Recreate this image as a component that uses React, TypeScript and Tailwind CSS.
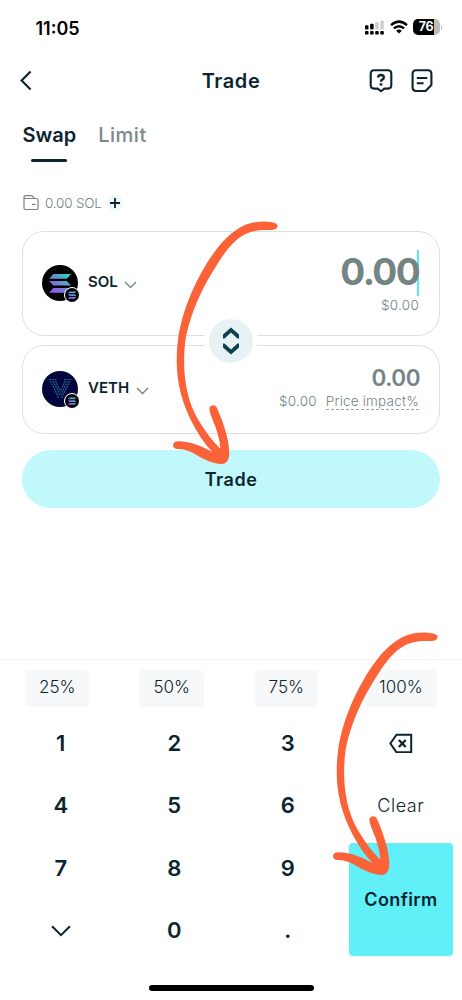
import React from 'react';

const percentages = ['25%', '50%', '75%', '100%'];

const BackIcon: React.FC = () => (
  <svg width="14" height="22" viewBox="0 0 14 22" fill="none" stroke="#0b2530" strokeWidth="2.2">
    <path d="M11.6 1.5L2.6 10.5L11.6 19.5" />
  </svg>
);

const HelpIcon: React.FC = () => (
  <svg width="24" height="24" viewBox="0 0 24 24" fill="none" stroke="#0b2530" strokeWidth="2.1" strokeLinejoin="round">
    <path d="M5 1.3H19Q22.3 1.3 22.3 4.8V16.3Q22.3 19.6 19 19.6H15.3L12 22.2L8.7 19.6H5Q1.7 19.6 1.7 16.3V4.8Q1.7 1.3 5 1.3Z" />
    <path d="M9.2 8.5Q9.2 6 12 6Q14.8 6 14.8 8.4Q14.8 9.9 13.2 10.6Q12 11.2 12 12.7" strokeWidth="2.4" />
    <path d="M10.7 15.4H13.3" strokeWidth="2.4" />
  </svg>
);

const NoteIcon: React.FC = () => (
  <svg width="22" height="24" viewBox="0 0 22 24" fill="none" stroke="#0b2530" strokeWidth="2.1" strokeLinejoin="round">
    <path d="M5 1.3H17Q20.4 1.3 20.4 4.8V16L14.6 22H5Q1.6 22 1.6 18.6V4.8Q1.6 1.3 5 1.3Z" />
    <path d="M5.8 9H16.2M5.8 14.2H12.6" />
  </svg>
);

const StatusIcons: React.FC = () => (
  <div className="flex items-center">
    <svg width="20" height="15" viewBox="0 0 20 15">
      <g fill="#000">
        <rect x="0" y="5.2" width="3.5" height="4.3" rx="0.9" />
        <rect x="5.1" y="3.7" width="3.5" height="5.8" rx="0.9" />
        <rect x="0" y="11" width="3.5" height="3.6" rx="0.9" />
        <rect x="5.1" y="11" width="3.5" height="3.6" rx="0.9" />
        <rect x="10.2" y="11" width="3.5" height="3.6" rx="0.9" />
        <rect x="15.3" y="11" width="3.5" height="3.6" rx="0.9" />
      </g>
      <g fill="#cfcfcf">
        <rect x="10.2" y="2" width="3.5" height="7.5" rx="0.9" />
        <rect x="15.3" y="0.5" width="3.5" height="9" rx="0.9" />
      </g>
    </svg>
    <svg className="mr-[5px] ml-[4.5px]" width="18" height="14" viewBox="0 0 18 14" fill="none" stroke="#000" strokeWidth="2.5">
      <path d="M1 5.1Q9 -1.9 17 5.1" />
      <path d="M3.9 8.4Q9 4 14.1 8.4" />
      <path d="M9 13.6L6.1 10.7Q9 8.5 11.9 10.7Z" fill="#000" stroke="none" />
    </svg>
    <div className="flex h-[15.5px] w-[27px] items-center justify-center rounded-[5px] bg-linear-to-r from-black from-76% to-[#bdbdbd] to-76% font-[Inter] text-[12.5px] font-bold tracking-[-0.3px] text-white">
      76
    </div>
    <div className="ml-px h-[5px] w-[1.5px] rounded-r-full bg-[#bdbdbd]" />
  </div>
);

const SolanaMark: React.FC<{ size: number; id: string }> = ({ size, id }) => (
  <svg width={size} height={size} viewBox="0 0 36 36">
    <defs>
      <linearGradient id={id} x1="8" y1="28" x2="28" y2="8" gradientUnits="userSpaceOnUse">
        <stop offset="0" stopColor="#a64bf5" />
        <stop offset="0.45" stopColor="#6e80d8" />
        <stop offset="1" stopColor="#25e6a5" />
      </linearGradient>
    </defs>
    <circle cx="18" cy="18" r="18" fill="#020204" />
    <path
      fill={`url(#${id})`}
      d="M11.3 9H29L24.9 13.8H7.2ZM7.2 16H24.9L29 20.5H11.3ZM11.3 23H29L24.9 27.8H7.2Z"
    />
  </svg>
);

const VethMark: React.FC = () => (
  <svg width="36" height="36" viewBox="0 0 36 36">
    <circle cx="18" cy="18" r="18" fill="#03063a" />
    <g fill="none" stroke="#286098" strokeWidth="1.2" strokeDasharray="2 0.8">
      <path d="M7 8.5H14.5M22 8.5H29.5" />
      <path d="M8.5 10L17 27.5M11 10L18 24M13.5 10L18.4 20.5" />
      <path d="M28 10L19.3 27.5M25.5 10L18.8 24M23 10L18.4 20.5" />
    </g>
  </svg>
);

const Chevron: React.FC = () => (
  <svg className="ml-[6.5px] mt-[3px]" width="13" height="8" viewBox="0 0 13 8" fill="none" stroke="#748383" strokeWidth="1.4">
    <path d="M1 1L6.5 6.4L12 1" />
  </svg>
);

interface TokenProps {
  symbol: string;
  icon: React.ReactNode;
  badgeId: string;
}

const Token: React.FC<TokenProps> = ({ symbol, icon, badgeId }) => (
  <div className="flex items-center pb-px">
    <div className="relative h-9 w-9">
      {icon}
      <div className="absolute top-[22px] left-[22px] rounded-full border border-white bg-white">
        <SolanaMark size={14} id={badgeId} />
      </div>
    </div>
    <span className="ml-[10px] pb-px text-[15px] font-semibold">{symbol}</span>
    <Chevron />
  </div>
);

// Hand drawn pointer, traced at three times its drawn size
const Arrow: React.FC = () => (
  <svg width="110" height="250" viewBox="120 25 330 750" fill="#fc6238">
    <path d="M443 46Q442 34 412 33C355 30 318 50 272 100C215 168 157 285 144 388C132 487 148 560 187 637C204 670 224 700 248 725C219 708 180 691 142 692C128 693 124 708 137 714C184 716 196 733 224 746C245 756 260 760 276 760C287 759 294 751 297 738C302 700 282 639 261 592C256 580 239 581 238 595C240 610 250 632 257 650C264 675 270 690 271 714C246 689 224 660 203 624C163 555 156 463 167 383C183 303 216 232 261 162C295 107 325 76 362 64C389 56 409 59 427 58Q442 56 443 46Z" />
  </svg>
);

const DigitKey: React.FC<{ label: string }> = ({ label }) => (
  <button className="flex items-center justify-center text-[22px] font-semibold">{label}</button>
);

const App: React.FC = () => {
  return (
    <div className="relative flex h-[1000px] w-[462px] flex-col overflow-hidden bg-white font-[Inter,sans-serif] text-[#0b2530]">
      {/* Status bar */}
      <div className="flex h-[54px] items-center justify-between pr-[20px] pl-[35.5px]">
        <span className="pt-[2px] text-[18px] font-semibold text-black">11:05</span>
        <StatusIcons />
      </div>

      {/* Header */}
      <div className="grid h-[54px] grid-cols-3 items-center pr-[29px] pl-[19px]">
        <BackIcon />
        <h1 className="pl-[10px] text-center text-[20px] font-semibold tracking-[0.6px]">Trade</h1>
        <div className="flex justify-end gap-[18px]">
          <HelpIcon />
          <NoteIcon />
        </div>
      </div>

      {/* Tabs */}
      <div className="flex h-[74px] items-start gap-[22px] px-[22.5px] pt-[13px] text-[20px] leading-7">
        <div className="flex flex-col items-center">
          <span className="font-semibold">Swap</span>
          <span className="mt-[9.5px] h-[3px] w-9 rounded-full bg-[#0b2530]" />
        </div>
        <span className="font-medium tracking-[0.5px] text-[#7b8989]">Limit</span>
      </div>

      {/* Balance */}
      <div className="flex h-[42px] items-center px-[23px] text-[13.5px] font-light text-[#748383]">
        <svg width="16" height="16" viewBox="0 0 16 16" fill="none" stroke="#748383" strokeWidth="1.2">
          <path d="M1 2.5V13Q1 14.5 2.5 14.5H13.5Q15 14.5 15 13V5Q15 3.5 13.5 3.5H2.5Q1 3.5 1 2Q1 0.7 2.5 0.7H8.5Q10 0.7 11 3.2M9 9.3H12.5" />
        </svg>
        <span className="ml-[6px] tracking-[-0.2px]">0.00 SOL</span>
        <div className="ml-[5px] flex h-4 w-4 items-center justify-center rounded-full bg-[#edf8fa]">
          <svg width="10" height="10" viewBox="0 0 10 10" stroke="#0b2530" strokeWidth="1.8">
            <path d="M5 0V10M0 5H10" />
          </svg>
        </div>
      </div>

      {/* Swap cards */}
      <div className="relative mx-[22px] mt-[7px] flex flex-col gap-[9px]">
        <div className="flex h-[105px] justify-between rounded-[22px] border border-[#dce0e1] pr-[20px] pl-[19px]">
          <Token symbol="SOL" icon={<SolanaMark size={36} id="sol" />} badgeId="sol-badge" />
          <div className="flex flex-col items-end pt-[18px]">
            <div className="flex h-[46px] items-center border-r-[2px] border-[#5ee6ee] pb-[2px] text-[37px] font-bold tracking-[-1.6px] text-[#748383]">
              <span className="-mr-[2px]">0.00</span>
            </div>
            <span className="text-[13.5px] leading-[18px] font-light tracking-[0.25px] text-[#748383]">$0.00</span>
          </div>
        </div>
        <div className="flex h-[89px] justify-between rounded-[22px] border border-[#dce0e1] pr-[19px] pl-[19px]">
          <Token symbol="VETH" icon={<VethMark />} badgeId="veth-badge" />
          <div className="flex flex-col items-end pt-[18px] text-[#748383]">
            <span className="text-[22.5px] leading-7 font-semibold tracking-[-0.5px]">0.00</span>
            <div className="mt-[2px] mr-px flex gap-[9px] text-[13.5px] leading-[15px] font-light tracking-[0.2px]">
              <span>$0.00</span>
              <span className="border-b border-dashed border-[#9aa5a5]">Price impact%</span>
            </div>
          </div>
        </div>
        <button className="absolute top-[82.5px] left-[182px] flex h-[54px] w-[54px] items-center justify-center rounded-full border-[5px] border-white bg-[#e7f2f4]">
          <svg width="18" height="28" viewBox="0 0 18 28" fill="#0b4150">
            <path d="M9 0.5L17 7.6V11.5L15.5 11.5L9 5.6L2.5 11.5H1V7.6Z" />
            <path d="M9 27.5L17 20.4V16.5H15.5L9 22.4L2.5 16.5H1V20.4Z" />
          </svg>
        </button>
      </div>

      <button className="mx-[22px] mt-[16px] h-[58px] shrink-0 rounded-full bg-[#c0f8fb] text-[18px] font-semibold tracking-[0.5px]">Trade</button>

      {/* Keypad */}
      <div className="mt-[151px] border-t border-[#f3f4f5] pt-[10px]">
        <div className="mr-[4px] grid grid-cols-4">
          {percentages.map((value) => (
            <div key={value} className="flex justify-center">
              <button className="h-[37px] rounded-[4px] bg-[#f6f8fa] px-[14px] pb-[2px] text-[17px] font-light">{value}</button>
            </div>
          ))}
        </div>
        <div className="mt-[5px] grid h-[250px] grid-cols-4 grid-rows-4 px-1">
          <DigitKey label="1" />
          <DigitKey label="2" />
          <DigitKey label="3" />
          <button className="flex items-center justify-center">
            <svg width="24" height="20" viewBox="0 0 24 20" fill="none" stroke="#0b2530" strokeWidth="2">
              <path d="M7.5 1.7H22.2V19.3H7.5L1.4 10.5Z" />
              <path d="M9.9 7L16.7 14M16.7 7L9.9 14" strokeWidth="2.3" />
            </svg>
          </button>
          <DigitKey label="4" />
          <DigitKey label="5" />
          <DigitKey label="6" />
          <button className="pr-px text-[18px] font-light tracking-[0.5px]">Clear</button>
          <DigitKey label="7" />
          <DigitKey label="8" />
          <DigitKey label="9" />
          <button className="row-span-2 my-[6px] mr-[5px] ml-[4.5px] rounded-[4px] bg-[#62f0f8] text-[18px] font-semibold tracking-[0.4px]">Confirm</button>
          <button className="flex items-center justify-center">
            <svg width="20" height="12" viewBox="0 0 20 12" fill="none" stroke="#0b2530" strokeWidth="2">
              <path d="M1 1.2L10 10.2L19 1.2" />
            </svg>
          </button>
          <DigitKey label="0" />
          <DigitKey label="." />
        </div>
      </div>

      <div className="mx-auto mt-[23px] h-[6px] w-[165px] shrink-0 rounded-full bg-black" />

      {/* Pointers drawn over the screen */}
      <div className="pointer-events-none absolute top-[218.5px] left-[170px]">
        <Arrow />
      </div>
      <div className="pointer-events-none absolute top-[630px] left-[330px]">
        <Arrow />
      </div>
    </div>
  );
};

export default App;
